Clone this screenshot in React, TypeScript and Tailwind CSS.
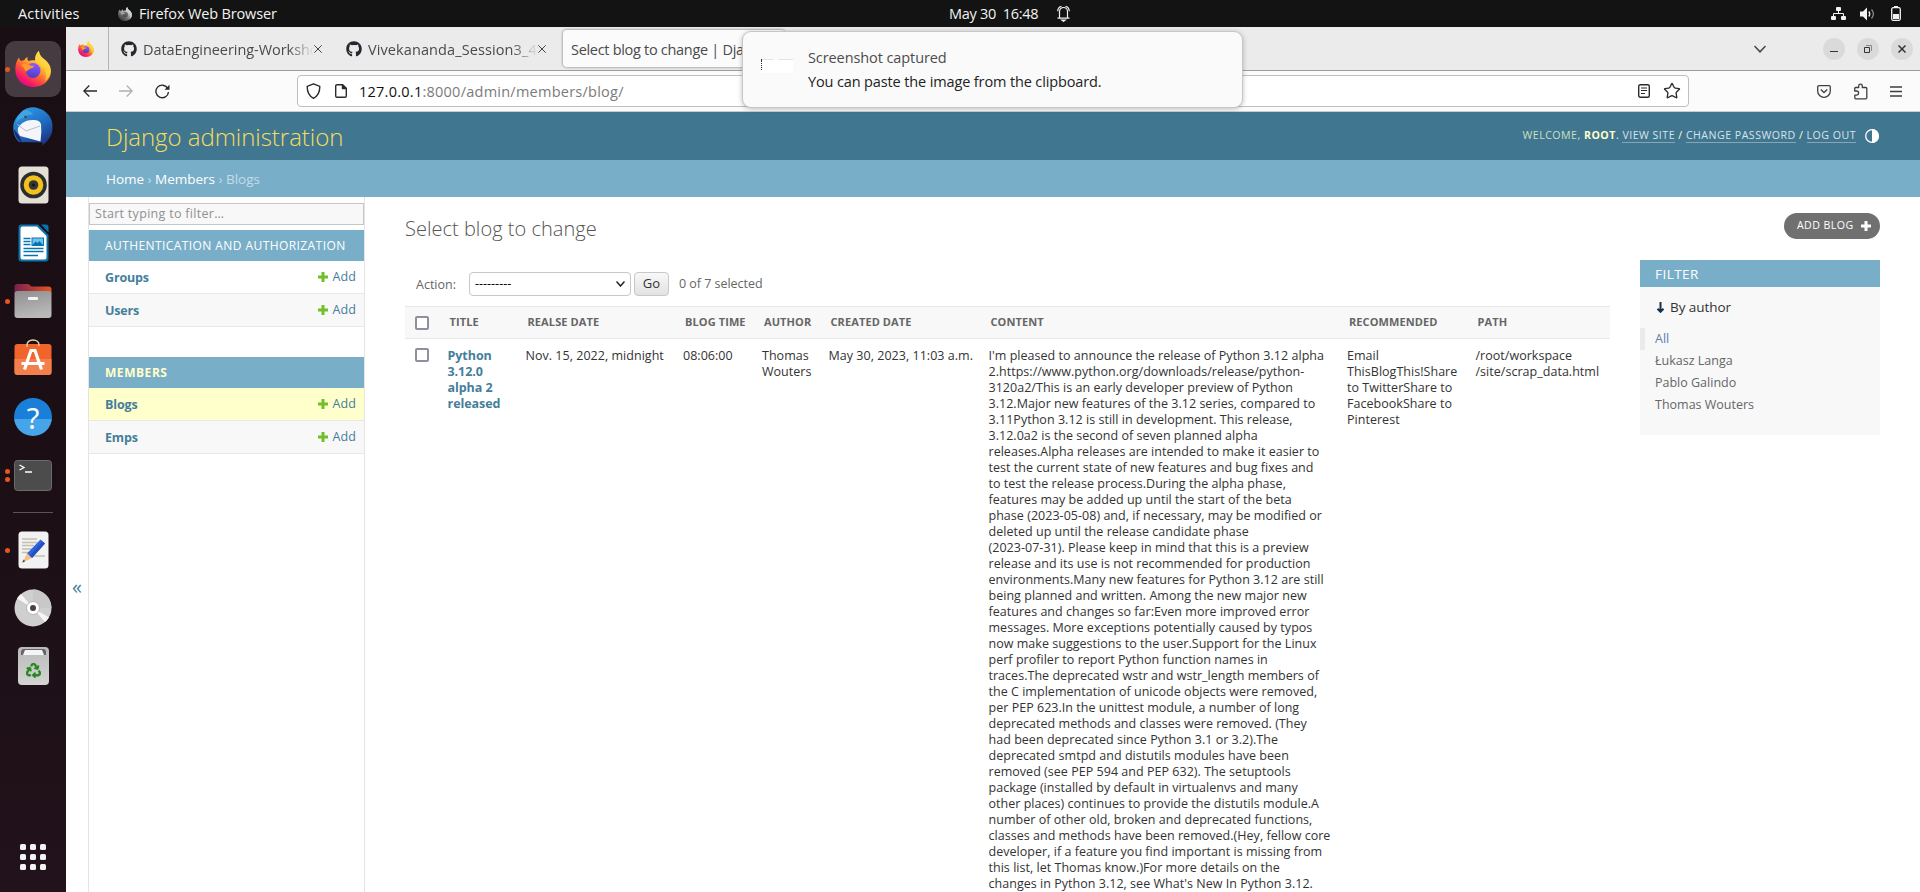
import React from "react";
import { FaGithub, FaRecycle } from "react-icons/fa";
import { Star } from "lucide-react";

const CONTENT = [
  "I'm pleased to announce the release of Python 3.12 alpha",
  "2.https://www.python.org/downloads/release/python-",
  "3120a2/This is an early developer preview of Python",
  "3.12.Major new features of the 3.12 series, compared to",
  "3.11Python 3.12 is still in development. This release,",
  "3.12.0a2 is the second of seven planned alpha",
  "releases.Alpha releases are intended to make it easier to",
  "test the current state of new features and bug fixes and",
  "to test the release process.During the alpha phase,",
  "features may be added up until the start of the beta",
  "phase (2023-05-08) and, if necessary, may be modified or",
  "deleted up until the release candidate phase",
  "(2023-07-31). Please keep in mind that this is a preview",
  "release and its use is not recommended for production",
  "environments.Many new features for Python 3.12 are still",
  "being planned and written. Among the new major new",
  "features and changes so far:Even more improved error",
  "messages. More exceptions potentially caused by typos",
  "now make suggestions to the user.Support for the Linux",
  "perf profiler to report Python function names in",
  "traces.The deprecated wstr and wstr_length members of",
  "the C implementation of unicode objects were removed,",
  "per PEP 623.In the unittest module, a number of long",
  "deprecated methods and classes were removed. (They",
  "had been deprecated since Python 3.1 or 3.2).The",
  "deprecated smtpd and distutils modules have been",
  "removed (see PEP 594 and PEP 632). The setuptools",
  "package (installed by default in virtualenvs and many",
  "other places) continues to provide the distutils module.A",
  "number of other old, broken and deprecated functions,",
  "classes and methods have been removed.(Hey, fellow core",
  "developer, if a feature you find important is missing from",
  "this list, let Thomas know.)For more details on the",
  "changes in Python 3.12, see What's New In Python 3.12.",
];

function Lines({ rows }: { rows: string[] }) {
  return (
    <div>
      {rows.map((r) => (
        <div key={r} className="whitespace-nowrap">
          {r}
        </div>
      ))}
    </div>
  );
}

function FirefoxIcon({ size, id, mono = false }: { size: number; id: string; mono?: boolean }) {
  return (
    <svg width={size} height={size} viewBox="0 0 36 36" className={mono ? "shrink-0 grayscale" : "shrink-0"}>
      <defs>
        <linearGradient id={id + "a"} x1="0.8" y1="0.1" x2="0.2" y2="0.95">
          <stop offset="0" stopColor="#fff44f" />
          <stop offset="0.35" stopColor="#ffb02e" />
          <stop offset="0.6" stopColor="#ff5a36" />
          <stop offset="0.85" stopColor="#f5156c" />
          <stop offset="1" stopColor="#d6108f" />
        </linearGradient>
        <linearGradient id={id + "b"} x1="0.6" y1="0" x2="0.4" y2="1">
          <stop offset="0" stopColor="#9059ff" />
          <stop offset="1" stopColor="#4b3cc4" />
        </linearGradient>
      </defs>
      <path
        d="M4 6.5c.4 1.700 1 2.700 1.800 3.500 1-.5 2-.8 3.300-.8C10 7.700 11.200 6.500 12.600 6c-.5 1.500-.2 2.700.8 4 1.700-.5 4.500-1 6.800-.6-.3-4 1-7.200 3.800-9.400.1 3.700 2.200 5.500 4.600 7.800C33 11 36 15 36 20.500 35.500 29.500 28 36 18.200 36 8 36 .3 28.500.3 18.600.3 13.500 1.500 9.700 4 6.500z"
        fill={`url(#${id}a)`}
      />
      <path d="M24 0c.1 3.700 2.200 5.500 4.600 7.800C33 11 35.500 15 35.500 20.500c-.3 4-2.500 7.500-5.500 9.500 2-5.500 1-11-2.500-14.500-2.500-2.500-6-4-7.300-6.100C19.900 5.400 21.200 2.200 24 0z" fill="#ffd43d" fillOpacity="0.75" />
      <circle cx="18" cy="19.500" r="7.500" fill={`url(#${id}b)`} />
      <path d="M6 14c3-2 7-1.500 9.500.5 1.500.3 2.800.2 3.500.5-.5 1.800-2.500 2.300-4.500 3-1 1.300-2.500 1.600-4 2.600-.5-2.500-2.500-4.600-4.500-6.600z" fill="#ff9a28" />
    </svg>
  );
}

function DockItem({ dots = 0, active = false, children }: { dots?: number; active?: boolean; children: React.ReactNode }) {
  return (
    <div className="flex h-[58px] w-[66px] shrink-0 items-center justify-center">
      <div className={active ? "relative flex size-14 items-center justify-center rounded-[10px] bg-[#453b41]" : "relative flex size-14 items-center justify-center"}>
        {dots > 0 && (
          <div className="absolute left-0 flex h-full flex-col items-center justify-center gap-[3px]">
            {Array.from({ length: dots }, (_, i) => (
              <span key={i} className="size-[5px] rounded-full bg-[#e95420]" />
            ))}
          </div>
        )}
        {children}
      </div>
    </div>
  );
}

function Dock() {
  return (
    <aside className="flex w-[66px] shrink-0 flex-col bg-linear-to-b from-[#1a0e15] via-[#1b0f15] to-[#22121b] pt-[13px]">
      <DockItem dots={1} active>
        <FirefoxIcon size={36} id="ffd" />
      </DockItem>
      <DockItem>
        <svg width="40" height="40" viewBox="0 0 40 40">
          <defs>
            <linearGradient id="tb" x1="0.2" y1="0" x2="0.8" y2="1">
              <stop offset="0" stopColor="#2f9be0" />
              <stop offset="0.5" stopColor="#1f6fc4" />
              <stop offset="1" stopColor="#1b2f7d" />
            </linearGradient>
          </defs>
          <path d="M11 3C15 0 21-.5 26 1.500 34 4 40 11.500 39.500 20c.3 8-4.500 14.500-10.500 18.500 1-3 0-3.500-1-3L6 35C1.500 31 0 25 .3 19 1 13 4 8.500 8 6z" fill="url(#tb)" />
          <path d="M5 21c3-5 8-8 14-8 5-.5 8 1 9 4l.3 8-.8 9.500L7 29C5 26.500 4.500 23.500 5 21z" fill="#f4f5f8" />
          <path d="M4.500 17.500L13 24l14-5" fill="none" stroke="#b9bdc6" strokeWidth="1" />
          <path d="M1 22c0 6 3.500 11 9 14.500L6 28.500C3.500 26 2.500 24 1 22z" fill="#1d2a72" />
          <path d="M11 3c5 0 8 2 9 5-4-1-7 0-9 3-3 0-6 2-8 5C4 9 7 5 11 3z" fill="#3fa4e4" />
          <circle cx="12.500" cy="10" r="1.300" fill="#5b3a3a" />
        </svg>
      </DockItem>
      <DockItem>
        <svg width="31" height="38" viewBox="0 0 31 38">
          <rect x="0.500" y="0.500" width="30" height="37" rx="3.500" fill="#e4e0d5" />
          <circle cx="15.500" cy="19" r="13.300" fill="#2b2e31" />
          <circle cx="15.500" cy="19" r="9.800" fill="#f2c11b" />
          <circle cx="15.500" cy="19" r="4.800" fill="#34373a" />
          <circle cx="15.500" cy="19" r="1.600" fill="#15171a" />
        </svg>
      </DockItem>
      <DockItem>
        <svg width="31" height="38" viewBox="0 0 31 38">
          <path d="M3.500.5H20L30.500 11v23.500a3 3 0 0 1-3 3h-24a3 3 0 0 1-3-3v-31a3 3 0 0 1 3-3z" fill="#0a73ad" />
          <path d="M23 .5h5a2.500 2.500 0 0 1 2.500 2.500v5.500z" fill="#0a73ad" />
          <path d="M4.500 2.500H19L28.500 12v21.500a2 2 0 0 1-2 2h-22a2 2 0 0 1-2-2v-29a2 2 0 0 1 2-2z" fill="#fff" />
          <path d="M5.500 14.500h7M5.500 17.500h7M5.500 20.500h7M5.500 24.500h20M5.500 27.500h20M5.500 31.500h14.500" stroke="#0a73ad" strokeWidth="1.400" />
          <rect x="14" y="14" width="11.500" height="7.500" fill="#6fc3ec" stroke="#0a73ad" strokeWidth="1" />
          <path d="M14.500 21l3-3.500 2 1.500 2-2 3.500 4z" fill="#0a73ad" />
        </svg>
      </DockItem>
      <DockItem dots={1}>
        <svg width="38" height="34" viewBox="0 0 38 34">
          <defs>
            <linearGradient id="fl" x1="0" x2="1">
              <stop offset="0" stopColor="#77214f" />
              <stop offset="1" stopColor="#e95420" />
            </linearGradient>
            <linearGradient id="fg" x1="0" x2="0.300" y2="1">
              <stop offset="0" stopColor="#8e8e8e" />
              <stop offset="1" stopColor="#b9b9b9" />
            </linearGradient>
          </defs>
          <path d="M.5 10V3a3 3 0 0 1 3-3h11l3 2.500h17a3 3 0 0 1 3 3V10z" fill="url(#fl)" />
          <rect x="0.500" y="7" width="37" height="27" rx="3" fill="url(#fg)" />
          <rect x="14" y="13" width="10" height="3" rx="0.800" fill="#f4f4f4" />
        </svg>
      </DockItem>
      <DockItem>
        <svg width="38" height="36" viewBox="0 0 38 36" className="mb-[5px]">
          <rect x="0.500" y="5" width="37" height="31" rx="3" fill="#f1652b" />
          <path d="M.5 20h37v13a3 3 0 0 1-3 3h-31a3 3 0 0 1-3-3z" fill="#f37f4d" />
          <path d="M13 8V6c0-3 2.500-5 6-5s6 2 6 5v1" fill="none" stroke="#e8d3a5" strokeWidth="1.400" />
          <path d="M10.500 30.500L17 11.500h4l6.500 19M7.500 24.500h23" fill="none" stroke="#fff" strokeWidth="3.200" />
        </svg>
      </DockItem>
      <DockItem>
        <div className="flex size-[38px] items-center justify-center rounded-full bg-linear-to-b from-[#1a7fd8] from-55% to-[#45a5e8] to-56% font-['Noto_Sans'] text-[29px] leading-none text-white">?</div>
      </DockItem>
      <DockItem dots={2}>
        <svg width="38" height="31" viewBox="0 0 38 31">
          <rect x="0.500" y="0.500" width="37" height="30" rx="3" fill="#4c4c4c" stroke="#6a6a6a" />
          <path d="M5.500 5l4.500 2.500-4.500 2.500M11 12h7" fill="none" stroke="#fff" strokeWidth="1.300" />
        </svg>
      </DockItem>
      <div className="flex h-[17px] items-center justify-center">
        <span className="h-px w-10 bg-[#5c5358]" />
      </div>
      <DockItem dots={1}>
        <svg width="31" height="38" viewBox="0 0 31 38">
          <rect x="0.500" y="0.500" width="30" height="37" rx="3.500" fill="#f2f2f2" />
          <path d="M4 8h15M4 11.500h15M4 14.500h12M4 18h10M4 21.500h7M13 25h14" stroke="#c4c0ae" strokeWidth="1.400" />
          <path d="M22.500 8.500l4.500 4-13 14.500-5-4.500z" fill="#2f62e0" />
          <path d="M24.500 10.500l2.500 2-13 14.500-2.500-2z" fill="#2450bd" />
          <path d="M9 22.500l5 4.500-9.500 4.500z" fill="#f7bd86" />
          <path d="M5.500 28.500l1.700 1.700-3 1.600z" fill="#444" />
        </svg>
      </DockItem>
      <DockItem>
        <svg width="38" height="38" viewBox="0 0 38 38">
          <circle cx="19" cy="19" r="18.500" fill="#cfcfcf" />
          <path d="M19 19V.5A18.500 18.500 0 0 1 37.500 19z" fill="#c8c8c8" />
          <path d="M19 19L3 9.500A18.500 18.500 0 0 1 7 5zM19 19l16 9.500a18.500 18.500 0 0 1-4 4.500z" fill="#f6f6f6" />
          <circle cx="19" cy="19" r="6.500" fill="#fff" stroke="#b5aa98" strokeWidth="0.800" />
          <circle cx="19" cy="19" r="3" fill="#444" />
        </svg>
      </DockItem>
      <DockItem>
        <div className="flex h-[38px] w-[31px] flex-col items-center rounded-[4px] bg-linear-to-b from-[#b9b9b9] to-[#d4d4d4] pt-[2px]">
          <svg width="25" height="6" viewBox="0 0 25 6">
            <path d="M0 6V3a3 3 0 0 1 3-3h19a3 3 0 0 1 3 3v3z" fill="#666" />
            <path d="M2 6l2-5h17l2 5z" fill="#f5f5f5" />
          </svg>
          <FaRecycle className="mt-[8px] size-[15px] stroke-[#24871f] stroke-[20px] text-[#24871f]" />
        </div>
      </DockItem>
      <div className="flex-1" />
      <div className="mb-[22px] ml-[20px] grid w-[26px] grid-cols-3 gap-[4px]">
        {Array.from({ length: 9 }, (_, i) => (
          <span key={i} className="size-[6px] rounded-[1.500px] bg-[#f2f2f2]" />
        ))}
      </div>
    </aside>
  );
}

function TopBar() {
  return (
    <header className="flex h-[27px] shrink-0 items-center bg-[#131313] text-[14.500px] text-[#f2f2f2]">
      <div className="flex w-[949px] items-center pl-[18px]">
        <span className="w-[100px] tracking-[0.200px]">Activities</span>
        <FirefoxIcon size={14} id="fft" mono />
        <span className="pl-[7px] tracking-[-0.150px]">Firefox Web Browser</span>
      </div>
      <div className="flex items-center">
        <span className="w-[108px] whitespace-pre tracking-[-0.300px]">May 30  16:48</span>
        <svg width="13" height="17" viewBox="0 0 13 17" fill="none" stroke="#f2f2f2" strokeWidth="1.200">
          <path d="M2.500 13V6.500a4 4 0 0 1 8 0V13M.5 13.200h12M4.500 1.200C2 2 .7 4 .7 6.200M8.500 1.200C11 2 12.300 4 12.300 6.200" />
          <path d="M4.800 15h3.400l-1.700 1.300z" fill="#f2f2f2" />
        </svg>
      </div>
      <div className="flex flex-1 items-center justify-end gap-[14px] pr-[19px]">
        <svg width="15" height="14" viewBox="0 0 15 14" fill="#f2f2f2">
          <rect x="5" width="5" height="4" rx="1" />
          <rect y="9" width="5" height="4" rx="1" />
          <rect x="10" y="9" width="5" height="4" rx="1" />
          <path d="M7.500 3v4M2.500 9V6.500h10V9" fill="none" stroke="#f2f2f2" />
        </svg>
        <svg width="15" height="14" viewBox="0 0 15 14" fill="#f2f2f2">
          <path d="M0 4.500h3L7 .5v13L3 9.500H0z" />
          <path d="M8.800 4.500c1.200 1.500 1.200 3.500 0 5" fill="none" stroke="#f2f2f2" strokeWidth="1.300" />
          <path d="M11.500 2.500c2.300 2.700 2.300 6.300 0 9" fill="none" stroke="#8a8a8a" strokeWidth="1.300" />
        </svg>
        <svg width="10" height="15" viewBox="0 0 10 15" className="ml-[2px]">
          <path d="M3 0h4v2H3z" fill="#f2f2f2" />
          <rect x="0.700" y="1.700" width="8.600" height="12.600" rx="1.500" fill="none" stroke="#f2f2f2" strokeWidth="1.300" />
          <rect x="2" y="8" width="6" height="5" fill="#f2f2f2" />
        </svg>
      </div>
    </header>
  );
}

function TabClose() {
  return (
    <svg width="8" height="8" viewBox="0 0 8 8" stroke="#444" strokeWidth="1" className="shrink-0">
      <path d="M.3.3l7.400 7.400M7.700.3L.3 7.700" />
    </svg>
  );
}

function TabBar() {
  return (
    <div className="flex h-11 shrink-0 items-center border-b border-[#9d9d9d] bg-[#ebebeb] text-[14.500px] text-[#4a4a4a]">
      <div className="flex h-full w-[43px] items-center border-r border-[#b4b4b4] pl-[12px]">
        <FirefoxIcon size={16} id="ffp" />
      </div>
      <div className="flex w-[225px] items-center pl-[12px]">
        <FaGithub className="size-4 shrink-0 text-[#24292f]" />
        <span className="ml-[6px] w-[171px] overflow-hidden mask-r-from-85% pt-[2px] whitespace-nowrap tracking-[-0.050px]">DataEngineering-Workshop</span>
        <TabClose />
      </div>
      <div className="flex w-[228px] items-center pl-[12px]">
        <FaGithub className="size-4 shrink-0 text-[#24292f]" />
        <span className="ml-[6px] w-[170px] overflow-hidden mask-r-from-85% pt-[2px] whitespace-nowrap tracking-[0.100px]">Vivekananda_Session3_4W</span>
        <TabClose />
      </div>
      <div className="ml-px flex h-[37px] w-[222px] items-center overflow-hidden rounded-[4px] bg-[#fbfbfb] pt-[2px] pl-[8px] whitespace-nowrap shadow-[0_0_2px_1px_rgba(0,0,0,0.250)]">
        <span className="tracking-[-0.300px]">Select blog to change | Django site…</span>
      </div>
      <div className="flex-1" />
      <svg width="12" height="8" viewBox="0 0 12 8" fill="none" stroke="#444" strokeWidth="1.500" className="mr-[57px]">
        <path d="M.5 1L6 6.800 11.500 1" />
      </svg>
      <div className="mt-px flex gap-3 pr-[7px]">
        <span className="flex size-[22px] items-center justify-center rounded-full bg-[#dadada]">
          <span className="mt-[4px] h-px w-2 bg-[#333]" />
        </span>
        <span className="flex size-[22px] items-center justify-center rounded-full bg-[#dadada]">
          <svg width="8" height="8" viewBox="0 0 8 8" fill="none" stroke="#333">
            <path d="M.5 2.500h5v5h-5z" />
            <path d="M2 .5h5.500V6" stroke="#888" />
          </svg>
        </span>
        <span className="flex size-[22px] items-center justify-center rounded-full bg-[#dadada]">
          <svg width="8" height="8" viewBox="0 0 8 8" stroke="#333" strokeWidth="1.500">
            <path d="M.5.5l7 7M7.500.5l-7 7" />
          </svg>
        </span>
      </div>
    </div>
  );
}

function NavBar() {
  return (
    <div className="flex h-[41px] shrink-0 items-center border-b border-[#cccccc] bg-[#fbfbfb] pl-[17px] text-[#2b2b2b]">
      <svg width="14" height="12" viewBox="0 0 14 12" fill="none" stroke="currentColor" strokeWidth="1.300">
        <path d="M14 6H.8M6.300.5L.8 6l5.500 5.500" />
      </svg>
      <svg width="14" height="12" viewBox="0 0 14 12" fill="none" stroke="#b0b0b0" strokeWidth="1.300" className="ml-[22px]">
        <path d="M0 6h13.200M7.700.5L13.200 6l-5.500 5.500" />
      </svg>
      <svg width="15" height="15" viewBox="0 0 15 15" fill="none" stroke="currentColor" strokeWidth="1.400" className="ml-[22px]">
        <path d="M12.800 4.500A6.300 6.300 0 1 0 13.500 8" />
        <path d="M14.500.8v5H9.500z" fill="currentColor" stroke="none" />
      </svg>
      <div className="ml-[127px] flex h-8 w-[1392px] items-center rounded-[4px] border border-[#bfbfbf] bg-white pr-[7px] pl-[8px]">
        <svg width="15" height="16" viewBox="0 0 15 16" fill="none" stroke="currentColor" strokeWidth="1.400" strokeLinejoin="round">
          <path d="M7.500.8l6.300 2.500c.1 5.500-1 9.200-6.300 12C2.200 12.500 1.100 8.800 1.200 3.300z" />
        </svg>
        <svg width="12" height="14" viewBox="0 0 12 14" fill="none" stroke="currentColor" strokeWidth="1.400" strokeLinejoin="round" className="ml-[14px]">
          <path d="M2 .7h5.500l3.800 3.800V12a1.300 1.300 0 0 1-1.300 1.300H2A1.300 1.300 0 0 1 .7 12V2A1.300 1.300 0 0 1 2 .7z" />
          <path d="M7.500.7v3.800h3.800z" fill="currentColor" />
        </svg>
        <span className="ml-[12px] pt-px text-[14.500px] tracking-[0.250px] text-[#7b7b7b]">
          <span className="text-[#111]">127.0.0.1</span>:8000/admin/members/blog/
        </span>
        <div className="flex-1" />
        <svg width="12" height="14" viewBox="0 0 12 14" fill="none" stroke="currentColor" strokeWidth="1.400">
          <rect x="0.700" y="0.700" width="10.600" height="12.600" rx="1.500" />
          <path d="M3 4h6M3 6.500h6M3 9.500h4" strokeWidth="1.200" />
        </svg>
        <Star className="ml-[13px] size-[18px]" strokeWidth={1.800} />
      </div>
      <div className="flex-1" />
      <div className="flex items-center pr-[18px] text-[#3f3f3f]">
        <svg width="14" height="13" viewBox="0 0 14 13" fill="none" stroke="currentColor" strokeWidth="1.300">
          <path d="M2 .7h10A1.300 1.300 0 0 1 13.300 2v4a6.300 6.300 0 0 1-12.600 0V2A1.300 1.300 0 0 1 2 .7z" />
          <path d="M3.800 4.500L7 7.500l3.200-3" />
        </svg>
        <svg width="15" height="17" viewBox="0 0 15 17" fill="none" stroke="currentColor" strokeWidth="1.300" strokeLinejoin="round" className="ml-[22px]">
          <path d="M1.700 8V5.500c0-.6.4-1 1-1h3V3a1.800 1.800 0 0 1 3.600 0v1.500h3.500c.6 0 1 .4 1 1v9.300c0 .6-.4 1-1 1h-10c-.6 0-1-.4-1-1v-2.600h1.700a1.900 1.900 0 0 0 0-4.200z" />
        </svg>
        <svg width="12" height="11" viewBox="0 0 12 11" stroke="currentColor" strokeWidth="1.300" className="ml-[22px]">
          <path d="M0 1h12M0 5.500h12M0 10h12" />
        </svg>
      </div>
    </div>
  );
}

function Plus({ size, color }: { size: number; color: string }) {
  return (
    <svg width={size} height={size} viewBox="0 0 10 10" stroke={color} strokeWidth="3">
      <path d="M5 0v10M0 5h10" />
    </svg>
  );
}

function ModelRow({ name, tone }: { name: string; tone: string }) {
  return (
    <div className={`flex h-[33px] shrink-0 items-center justify-between border-b border-[#e8e8e8] pr-[8px] pl-[16px] text-[12.500px] text-[#447e9b] ${tone}`}>
      <span className="pt-[2px] font-bold tracking-[-0.150px]">{name}</span>
      <span className="flex items-center gap-[5px]">
        <Plus size={10} color="#70bf2b" />
        <span className="pt-px tracking-[0.100px]">Add</span>
      </span>
    </div>
  );
}

function Sidebar() {
  return (
    <nav className="flex w-[277px] shrink-0 flex-col border-x border-[#e4e4e4] pt-[6px]">
      <div className="flex h-[22px] shrink-0 items-center border border-[#c6c6c6] bg-[#f8f8f8] pt-px pl-[5px] text-[12.500px] tracking-[0.300px] text-[#909090]">Start typing to filter…</div>
      <div className="mt-[5px] flex h-[31px] shrink-0 items-center bg-[#79aec8] pl-[16px] text-[12px] tracking-[0.420px] whitespace-nowrap text-white">AUTHENTICATION AND AUTHORIZATION</div>
      <ModelRow name="Groups" tone="bg-white" />
      <ModelRow name="Users" tone="bg-[#f8f8f8]" />
      <div className="mt-[30px] flex h-[31px] shrink-0 items-center bg-[#79aec8] pl-[16px] text-[12px] font-bold tracking-[0.550px] text-[#ffffcc]">MEMBERS</div>
      <ModelRow name="Blogs" tone="bg-[#ffffcc]" />
      <ModelRow name="Emps" tone="bg-[#f8f8f8]" />
    </nav>
  );
}

function Checkbox() {
  return <span className="block size-[14px] rounded-[2px] border-2 border-[#8f8f9d] bg-white" />;
}

const GRID = "grid grid-cols-[32.500px_78px_157.500px_79px_66.500px_160px_358.500px_128.500px_1fr]";

function Changelist() {
  return (
    <section className="w-[1205px] shrink-0">
      <div className="flex h-[26px] items-center pl-[10px] text-[12.500px] text-[#666]">
        <span className="w-[54px] pt-[2px] pl-px">Action:</span>
        <div className="flex h-6 w-[162px] items-center justify-between rounded-[4px] border border-[#c8c8c8] bg-white pr-[5px] pl-[5px] text-black">
          <span>---------</span>
          <svg width="9" height="6" viewBox="0 0 9 6" fill="none" stroke="#222" strokeWidth="1.500">
            <path d="M.5.5l4 4.500 4-4.500" />
          </svg>
        </div>
        <div className="ml-[3px] flex h-6 w-[35px] items-center justify-center rounded-[4px] border border-[#c8c8c8] bg-linear-to-b from-[#f8f8f8] to-[#e2e2e2] text-[13px] text-[#333]">Go</div>
        <span className="pl-[10px] tracking-[-0.030px]">0 of 7 selected</span>
      </div>
      <div className={`${GRID} mt-[9px] h-[33px] items-center border-y border-[#e8e8e8] bg-[#f8f8f8] pl-[12px] text-[11px] font-bold tracking-[0.100px] whitespace-nowrap text-[#666]`}>
        <div className="-ml-[2px]">
          <Checkbox />
        </div>
        <span>TITLE</span>
        <span>REALSE DATE</span>
        <span>BLOG TIME</span>
        <span>AUTHOR</span>
        <span>CREATED DATE</span>
        <span>CONTENT</span>
        <span>RECOMMENDED</span>
        <span>PATH</span>
      </div>
      <div className={`${GRID} pt-[9px] pl-[10px] text-[12.500px] leading-4 tracking-[0.030px] text-[#333]`}>
        <Checkbox />
        <div className="font-bold tracking-[-0.050px] text-[#447e9b]">
          <Lines rows={["Python", "3.12.0", "alpha 2", "released"]} />
        </div>
        <Lines rows={["Nov. 15, 2022, midnight"]} />
        <Lines rows={["08:06:00"]} />
        <Lines rows={["Thomas", "Wouters"]} />
        <Lines rows={["May 30, 2023, 11:03 a.m."]} />
        <Lines rows={CONTENT} />
        <Lines rows={["Email", "ThisBlogThis!Share", "to TwitterShare to", "FacebookShare to", "Pinterest"]} />
        <Lines rows={["/root/workspace", "/site/scrap_data.html"]} />
      </div>
    </section>
  );
}

function FilterPanel() {
  return (
    <aside className="mt-[-11px] ml-[30px] h-[175px] w-60 bg-[#f8f8f8] text-[12.500px] text-[#666]">
      <h2 className="flex h-[27px] items-center bg-[#79aec8] pt-px pl-[15px] text-[13.500px] tracking-[0.450px] text-white">FILTER</h2>
      <h3 className="flex h-[41px] items-center gap-[6px] pl-[17px] text-[13.500px] tracking-[-0.050px] text-[#333]">
        <svg width="7" height="11" viewBox="0 0 7 11" fill="none" stroke="#16304d" strokeWidth="2">
          <path d="M3.500 0v9.500M.5 6.800l3 3 3-3" />
        </svg>
        By author
      </h3>
      <ul className="leading-[22px]">
        <li className="border-l-[5px] border-[#eaeaea] pl-[10px] text-[#5b80b2]">All</li>
        <li className="pl-[15px]">Łukasz Langa</li>
        <li className="pl-[15px]">Pablo Galindo</li>
        <li className="pl-[15px]">Thomas Wouters</li>
      </ul>
    </aside>
  );
}

function DjangoPage() {
  return (
    <div className="flex min-h-0 flex-1 flex-col overflow-hidden bg-white">
      <div className="flex h-12 shrink-0 items-center justify-between bg-[#417690] pr-[41px] pl-[40px]">
        <h1 className="pt-[2px] text-[24px] font-light tracking-[-0.040px] text-[#f5dd5d]">Django administration</h1>
        <div className="flex items-center text-[10.600px] tracking-[0.490px] whitespace-pre text-[#ffffcc]">
          <span className="text-[#c9e0bf]">WELCOME, </span>
          <span className="font-bold">ROOT</span>
          <span>. </span>
          <span className="border-b border-[#86a6b5] leading-[14px] text-[#d9e4e9]">VIEW SITE</span>
          <span> / </span>
          <span className="border-b border-[#86a6b5] leading-[14px] text-[#d9e4e9]">CHANGE PASSWORD</span>
          <span> / </span>
          <span className="border-b border-[#86a6b5] leading-[14px] text-[#d9e4e9]">LOG OUT</span>
          <svg width="14" height="14" viewBox="0 0 14 14" className="ml-[9px]">
            <circle cx="7" cy="7" r="6.300" fill="none" stroke="#fff" strokeWidth="1.300" />
            <path d="M7 0a7 7 0 0 1 0 14z" fill="#fff" />
          </svg>
        </div>
      </div>
      <div className="flex h-[37px] shrink-0 items-center bg-[#79aec8] pt-px pl-[40px] text-[13.500px] tracking-[-0.020px] whitespace-pre text-[#c4dce8]">
        <span className="text-white">Home</span> › <span className="text-white">Members</span> › Blogs
      </div>
      <div className="flex min-h-0 flex-1">
        <div className="flex w-[22px] shrink-0 items-center justify-center pt-[84px] text-[20px] text-[#447e9b]">«</div>
        <Sidebar />
        <main className="min-w-0 flex-1 pt-[16px] pl-[40px]">
          <div className="flex items-start justify-between pr-[40px]">
            <h2 className="pt-[1px] text-[20px] leading-[30px] font-light tracking-[0.020px] text-[#555]">Select blog to change</h2>
            <div className="flex h-[26px] w-24 items-center justify-between rounded-full bg-[#707070] pr-[9px] pl-[13px] text-[10.600px] tracking-[0.420px] text-white">
              ADD BLOG
              <Plus size={10} color="#fff" />
            </div>
          </div>
          <div className="mt-[27px] flex items-start">
            <Changelist />
            <FilterPanel />
          </div>
        </main>
      </div>
    </div>
  );
}

function Notification() {
  return (
    <div className="absolute top-[31px] left-[742px] flex h-[77px] w-[501px] items-start rounded-[9px] border border-[#c6c6c6] bg-[#fafafa] pl-[18px] text-[14.500px] shadow-[0_1px_5px_rgba(0,0,0,0.250)]">
      <svg width="32" height="14" viewBox="0 0 32 14" className="mt-[27px]">
        <path d="M0 0h32v14H0z" fill="#fff" />
        <path d="M1 .5h12M17 .5h15" stroke="#e4e4e4" />
        <path d="M.5 0v14" stroke="#333" strokeDasharray="3 1 1 1 1 1 1 1 1" />
      </svg>
      <div className="pt-[14px] pl-[15px] leading-6">
        <div className="tracking-[-0.090px] text-[#4c4c4c]">Screenshot captured</div>
        <div className="tracking-[-0.130px] text-[#222]">You can paste the image from the clipboard.</div>
      </div>
    </div>
  );
}

export default function App() {
  return (
    <div className="relative flex h-[892px] w-[1920px] flex-col overflow-hidden bg-white font-['Open_Sans','Noto_Sans',sans-serif]">
      <TopBar />
      <div className="flex min-h-0 flex-1">
        <Dock />
        <div className="flex min-w-0 flex-1 flex-col">
          <TabBar />
          <NavBar />
          <DjangoPage />
        </div>
      </div>
      <Notification />
    </div>
  );
}
